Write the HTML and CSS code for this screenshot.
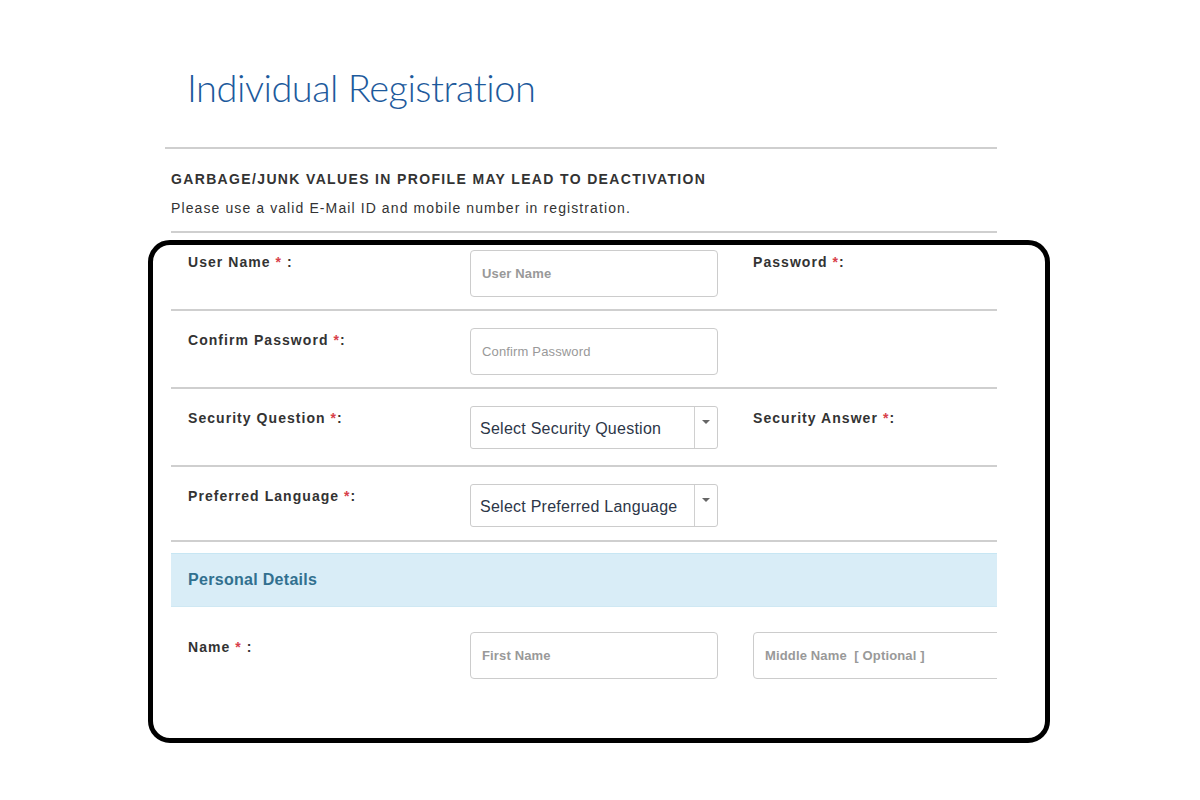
FILE: index.html
```html
<!DOCTYPE html>
<html>
<head>
<meta charset="utf-8">
<title>Individual Registration</title>
<link rel="stylesheet" href="styles.css">
</head>
<body>
<div class="page">
  <h1 class="title">Individual Registration</h1>
  <div class="hr hr-top"></div>
  <div class="notice">
    <div class="notice-head">GARBAGE/JUNK VALUES IN PROFILE MAY LEAD TO DEACTIVATION</div>
    <div class="notice-text">Please use a valid E-Mail ID and mobile number in registration.</div>
  </div>
  <div class="form">
    <div class="hr"></div>
    <div class="row">
      <div class="label">User Name <span class="req">*</span> :</div>
      <div class="field"><div class="input ph-bold">User Name</div></div>
      <div class="label">Password <span class="req">*</span>:</div>
    </div>
    <div class="hr"></div>
    <div class="row">
      <div class="label">Confirm Password <span class="req">*</span>:</div>
      <div class="field"><div class="input">Confirm Password</div></div>
      <div></div>
    </div>
    <div class="hr"></div>
    <div class="row">
      <div class="label">Security Question <span class="req">*</span>:</div>
      <div class="field">
        <div class="select"><span class="select-text">Select Security Question</span><span class="caret-box"><span class="caret"></span></span></div>
      </div>
      <div class="label">Security Answer <span class="req">*</span>:</div>
    </div>
    <div class="hr"></div>
    <div class="row row-short">
      <div class="label">Preferred Language <span class="req">*</span>:</div>
      <div class="field">
        <div class="select"><span class="select-text">Select Preferred Language</span><span class="caret-box"><span class="caret"></span></span></div>
      </div>
      <div></div>
    </div>
    <div class="hr"></div>
    <div class="panel-head">Personal Details</div>
    <div class="row row-name">
      <div class="label">Name <span class="req">*</span> :</div>
      <div class="field"><div class="input ph-bold">First Name</div></div>
      <div class="field"><div class="input ph-bold">Middle Name &nbsp;[ Optional ]</div></div>
    </div>
  </div>
</div>
<div class="annotation"></div>
</body>
</html>
```
FILE: styles.css
```css
html, body {
  margin: 0;
  padding: 0;
  background: #fff;
}
body {
  font-family: "Liberation Sans", Arial, sans-serif;
  color: #333;
  width: 1200px;
  height: 800px;
  overflow: hidden;
  position: relative;
}
.page {
  margin-left: 165px;
  width: 832px;
}
.title {
  margin: 0;
  padding: 64px 0 0 22px;
  height: 147px;
  font-family: Lato, "Open Sans", sans-serif;
  font-weight: 300;
  font-size: 38px;
  line-height: 46px;
  color: #1d5a9c;
  letter-spacing: -0.5px;
  box-sizing: border-box;
}
.hr {
  height: 2px;
  background: #cfcfcf;
}
.notice {
  padding: 20px 0 13px 6px;
}
.notice-head {
  font-weight: bold;
  font-size: 14px;
  line-height: 20px;
  letter-spacing: 1.35px;
  color: #333;
}
.notice-text {
  font-size: 14px;
  line-height: 20px;
  letter-spacing: 1.1px;
  margin-top: 9px;
  color: #333;
}
.form {
  margin-left: 6px;
  width: 826px;
  overflow: hidden;
}
.row {
  display: grid;
  grid-template-columns: 282px 283px 283px;
  padding-left: 17px;
  height: 76px;
  box-sizing: border-box;
}
.row-short {
  height: 73px;
}
.row-name {
  height: 120px;
}
.label {
  font-weight: bold;
  font-size: 14px;
  line-height: 20px;
  letter-spacing: 1.05px;
  margin-top: 19px;
  color: #333;
  white-space: nowrap;
}
.row-name .label {
  margin-top: 30px;
}
.req {
  color: #d8404a;
}
.field {
  padding-top: 17px;
}
.row-name .field {
  padding-top: 25px;
}
.input {
  width: 248px;
  height: 47px;
  box-sizing: border-box;
  border: 1px solid #cccccc;
  border-radius: 4px;
  padding: 0 11px;
  display: flex;
  align-items: center;
  font-size: 13px;
  letter-spacing: 0.15px;
  color: #999;
  white-space: nowrap;
  overflow: hidden;
}
.ph-bold {
  font-weight: bold;
}
.select {
  width: 248px;
  height: 43px;
  box-sizing: border-box;
  border: 1px solid #cccccc;
  border-radius: 3px;
  display: flex;
  align-items: stretch;
}
.select-text {
  flex: 1;
  display: flex;
  align-items: center;
  padding-left: 9px;
  padding-top: 2px;
  font-size: 16px;
  letter-spacing: 0.25px;
  color: #2d3648;
  white-space: nowrap;
}
.caret-box {
  width: 23px;
  border-left: 1px solid #d0d0d0;
  display: flex;
  justify-content: center;
  padding-top: 13px;
  box-sizing: border-box;
}
.caret {
  width: 0;
  height: 0;
  border-left: 4px solid transparent;
  border-right: 4px solid transparent;
  border-top: 4px solid #666;
}
.panel-head {
  margin-top: 11px;
  height: 54px;
  box-sizing: border-box;
  background: #d9edf7;
  border-top: 1px solid #c7e6f3;
  border-bottom: 1px solid #cfe8f3;
  padding-left: 17px;
  display: flex;
  align-items: center;
  font-weight: bold;
  font-size: 16px;
  letter-spacing: 0.3px;
  color: #31708f;
}
.annotation {
  position: absolute;
  left: 148px;
  top: 240px;
  width: 902px;
  height: 503px;
  box-sizing: border-box;
  border: 5px solid #000;
  border-radius: 22px;
  pointer-events: none;
}
```
